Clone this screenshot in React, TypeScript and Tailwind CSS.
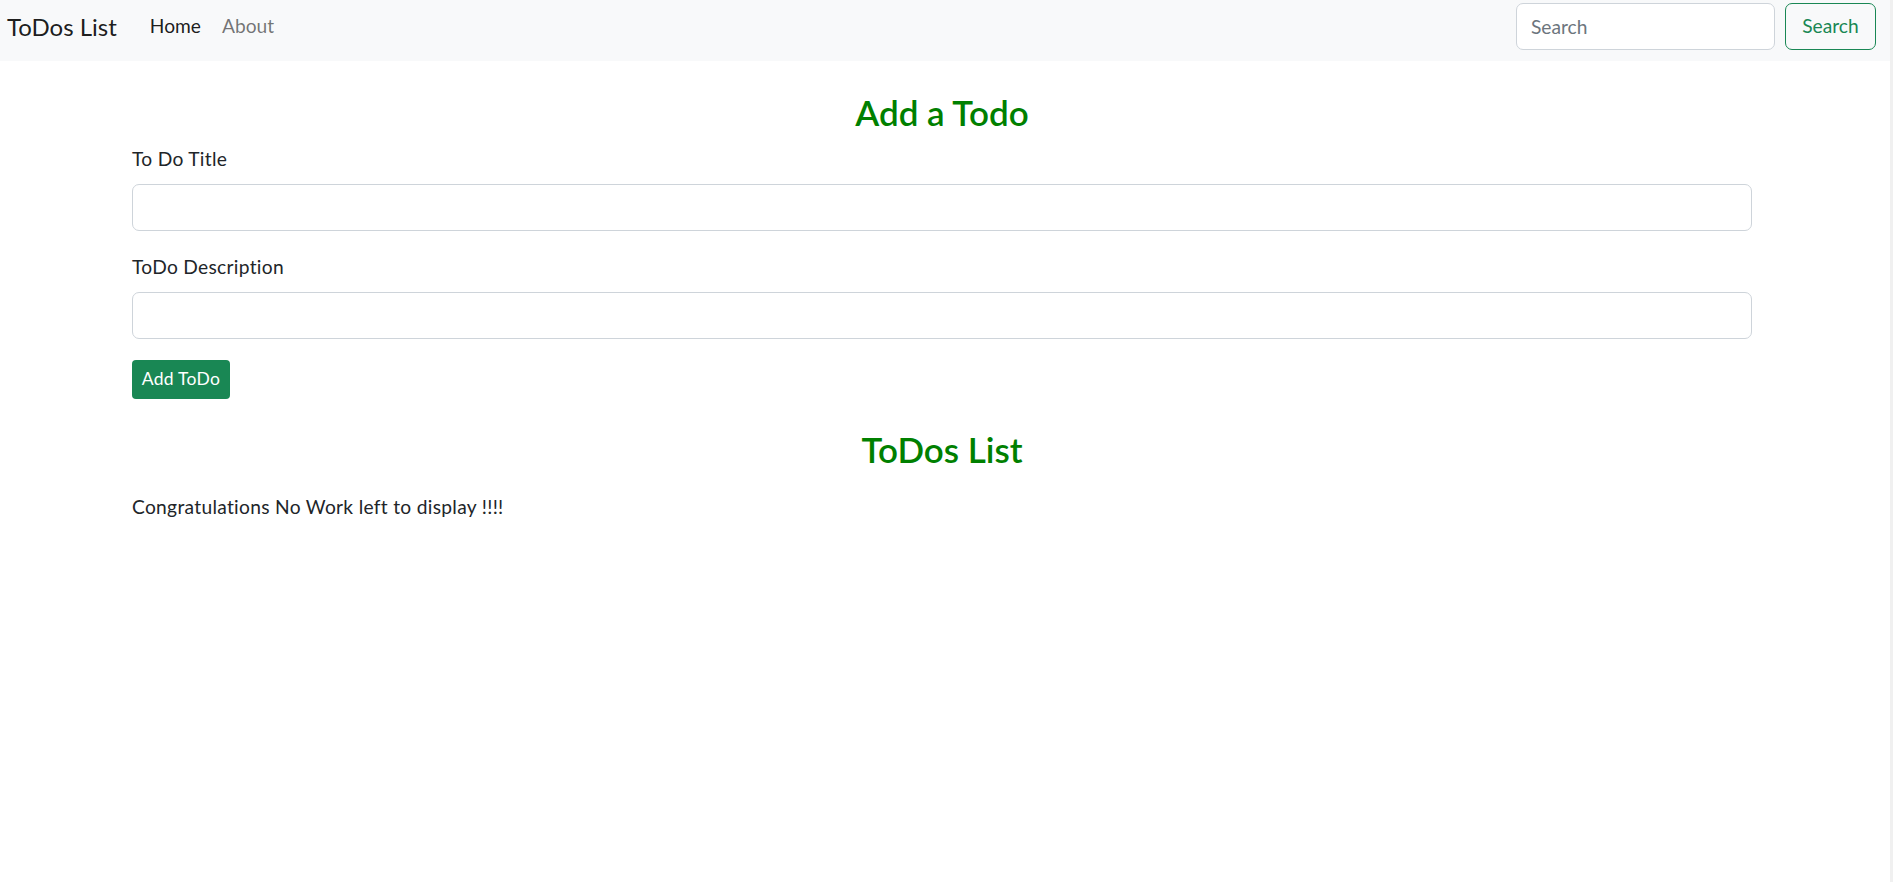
import { useState } from "react";

const font = "font-['Segoe_UI','Lato','Liberation_Sans',sans-serif]";

const Navbar = () => (
  <nav className="flex h-[61px] items-start justify-between bg-[#f8f9fa] pl-[7px] pr-[14px] pt-[3px]">
    <div className="flex h-[47px] items-center">
      <a href="#" className="text-[24px] leading-none text-black/90">
        ToDos List
      </a>
      <ul className="ml-[33px] flex items-center gap-[21px] text-[19.2px]">
        <li>
          <a href="#" className="text-black/90">
            Home
          </a>
        </li>
        <li>
          <a href="#" className="text-black/55">
            About
          </a>
        </li>
      </ul>
    </div>
    <form className="flex items-center gap-[10px]" onSubmit={(e) => e.preventDefault()}>
      <input
        type="search"
        placeholder="Search"
        className="h-[47px] w-[259px] rounded-[7px] border border-[#ced4da] bg-white px-[14px] text-[19.2px] text-[#212529] outline-none placeholder:text-[#6c757d]"
      />
      <button className="h-[47px] w-[91px] rounded-[7px] border border-[#198754] text-[19.2px] text-[#198754]">
        Search
      </button>
    </form>
  </nav>
);

const App = () => {
  const [title, setTitle] = useState("");
  const [desc, setDesc] = useState("");

  return (
    <div className={`${font} flex min-h-[882px] bg-white text-[#212529]`}>
      <div className="flex-1">
        <Navbar />
        <div className="pl-[132px] pr-[138px] tracking-[0.3px]">
          <h3 className="mt-[30px] text-center text-[35px] font-semibold leading-[1.2] tracking-normal text-[#008000]">
            Add a Todo
          </h3>
          <form onSubmit={(e) => e.preventDefault()}>
            <label className="mt-[12px] block text-[19.2px] leading-[1.5]">To Do Title</label>
            <input
              value={title}
              onChange={(e) => setTitle(e.target.value)}
              className="mt-[10px] block h-[47px] w-full rounded-[7px] border border-[#ced4da] px-[14px] text-[19.2px] outline-none"
            />
            <label className="mt-[22px] block text-[19.2px] leading-[1.5]">ToDo Description</label>
            <input
              value={desc}
              onChange={(e) => setDesc(e.target.value)}
              className="mt-[10px] block h-[47px] w-full rounded-[7px] border border-[#ced4da] px-[14px] text-[19.2px] outline-none"
            />
            <button className="mt-[21px] block h-[39px] w-[98px] rounded-[4px] bg-[#198754] text-[17.5px] text-white">
              Add ToDo
            </button>
          </form>
          <h3 className="mt-[29px] text-center text-[35px] font-semibold leading-[1.2] tracking-normal text-[#008000]">
            ToDos List
          </h3>
          <p className="mt-[23px] text-[19.2px] leading-[1.5]">Congratulations No Work left to display !!!!</p>
        </div>
      </div>
      <div className="w-[3px] bg-[#f0f0f0]" />
    </div>
  );
};

export default App;
